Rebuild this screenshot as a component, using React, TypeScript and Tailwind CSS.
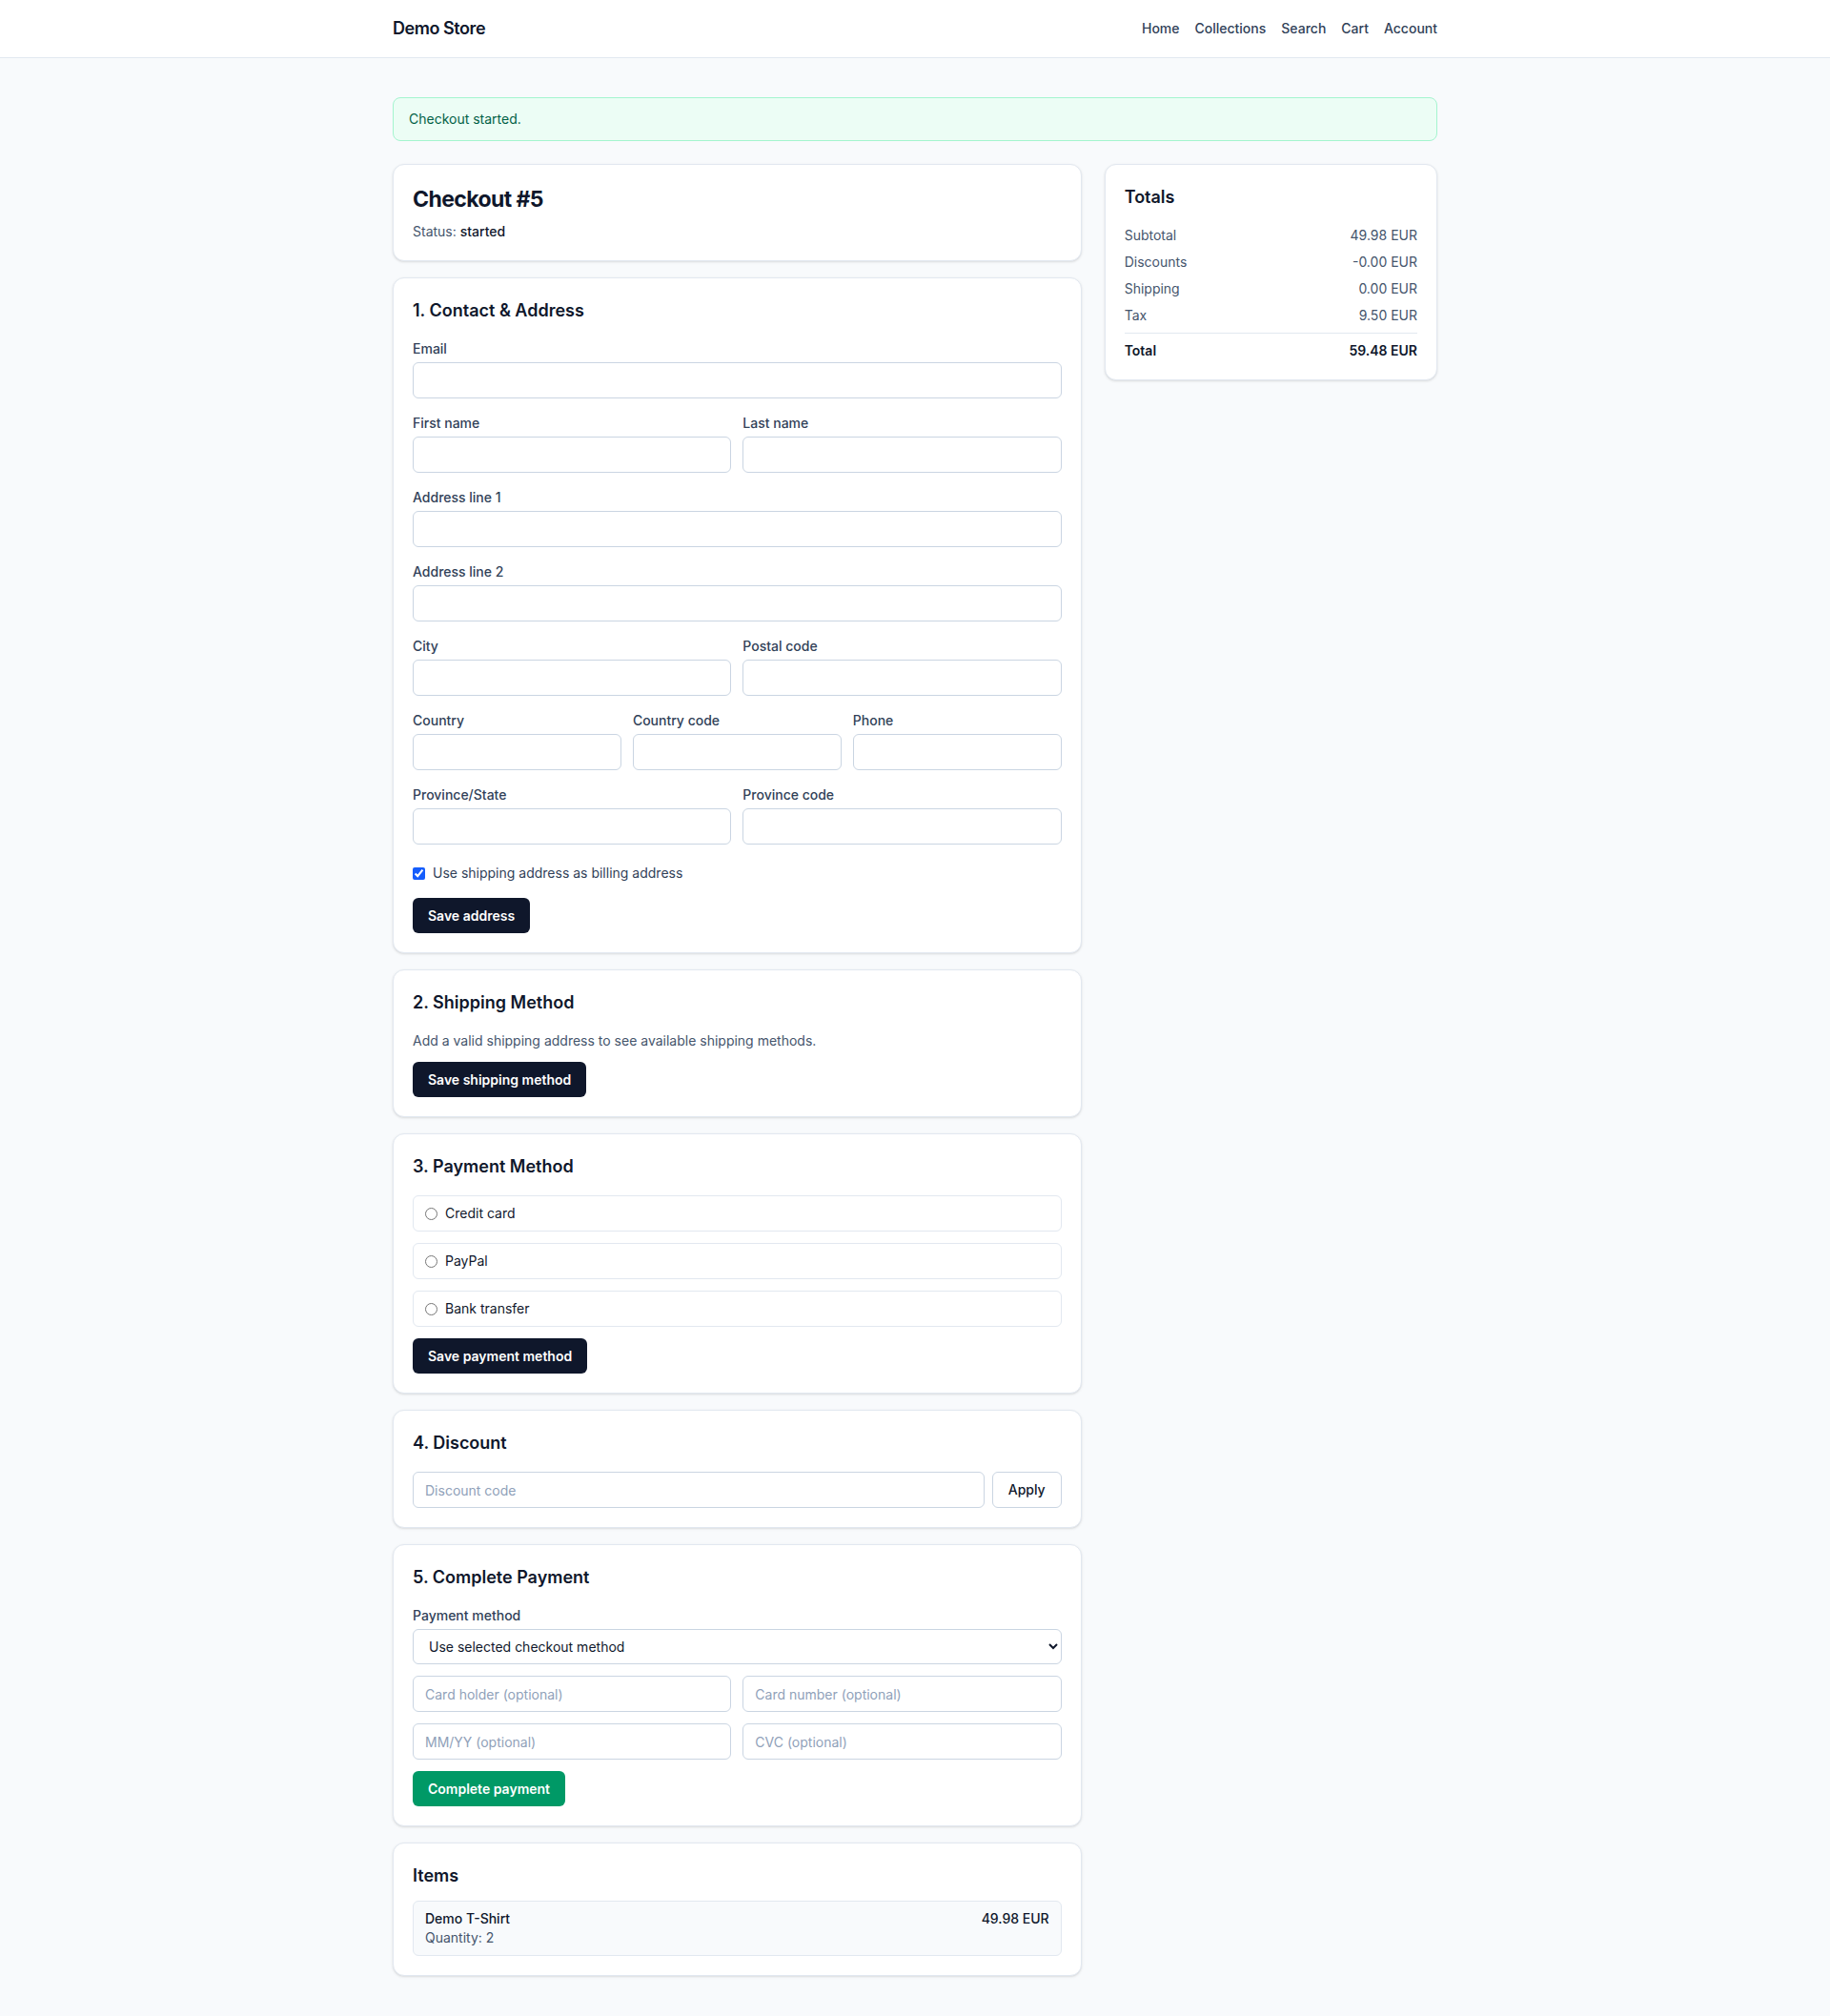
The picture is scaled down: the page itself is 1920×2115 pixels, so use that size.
import React, { useState } from "react";

type TotalRow = { label: string; value: string };

const totals: TotalRow[] = [
  { label: "Subtotal", value: "49.98 EUR" },
  { label: "Discounts", value: "-0.00 EUR" },
  { label: "Shipping", value: "0.00 EUR" },
  { label: "Tax", value: "9.50 EUR" },
];

const paymentMethods = ["Credit card", "PayPal", "Bank transfer"];

const inputClass =
  "block w-full h-[38px] rounded-md border border-slate-300 bg-white px-3 text-sm text-slate-900 placeholder:text-slate-400 focus:outline-none";

const Field = ({ label }: { label: string }) => (
  <label className="block">
    <span className="mb-1 block text-sm font-medium text-slate-700">{label}</span>
    <input className={inputClass} />
  </label>
);

const Card = ({ children }: { children: React.ReactNode }) => (
  <section className="rounded-xl border border-slate-200 bg-white p-5 shadow-sm">
    {children}
  </section>
);

const CardTitle = ({ children }: { children: React.ReactNode }) => (
  <h2 className="mb-4 text-lg font-semibold text-slate-900">{children}</h2>
);

const DarkButton = ({ children }: { children: React.ReactNode }) => (
  <button className="h-[37px] rounded-md bg-slate-900 px-4 text-sm font-semibold text-white">
    {children}
  </button>
);

export default function App() {
  const [sameBilling, setSameBilling] = useState(true);
  const [payment, setPayment] = useState("");

  return (
    <div
      className="min-h-screen bg-slate-50 text-slate-900"
      style={{ fontFamily: "Inter, 'Noto Sans', sans-serif" }}
    >
      <header className="border-b border-slate-200 bg-white">
        <div className="mx-auto flex h-[60px] max-w-[1096px] items-center justify-between">
          <span className="text-lg font-semibold tracking-tight text-slate-900">Demo Store</span>
          <nav className="flex items-center gap-4 text-sm font-medium text-slate-700">
            <a href="#">Home</a>
            <a href="#">Collections</a>
            <a href="#">Search</a>
            <a href="#">Cart</a>
            <a href="#">Account</a>
          </nav>
        </div>
      </header>

      <main className="mx-auto max-w-[1096px] pb-[42px] pt-[41px]">
        <div className="mb-6 rounded-lg border border-emerald-200 bg-emerald-50 px-4 py-3 text-sm text-emerald-800">
          Checkout started.
        </div>

        <div className="grid grid-cols-3 items-start gap-6">
          <div className="col-span-2 flex flex-col gap-[17px]">
            <Card>
              <h1 className="text-[23px] leading-8 font-bold tracking-tight text-slate-900">
                Checkout #5
              </h1>
              <p className="mt-2 text-sm text-slate-600">
                Status: <span className="font-medium text-slate-900">started</span>
              </p>
            </Card>

            <Card>
              <CardTitle>1. Contact &amp; Address</CardTitle>
              <div className="flex flex-col gap-4">
                <Field label="Email" />
                <div className="grid grid-cols-2 gap-3">
                  <Field label="First name" />
                  <Field label="Last name" />
                </div>
                <Field label="Address line 1" />
                <Field label="Address line 2" />
                <div className="grid grid-cols-2 gap-3">
                  <Field label="City" />
                  <Field label="Postal code" />
                </div>
                <div className="grid grid-cols-3 gap-3">
                  <Field label="Country" />
                  <Field label="Country code" />
                  <Field label="Phone" />
                </div>
                <div className="grid grid-cols-2 gap-3">
                  <Field label="Province/State" />
                  <Field label="Province code" />
                </div>
                <label className="flex items-center gap-2 pt-1 text-sm text-slate-700">
                  <input
                    type="checkbox"
                    className="accent-blue-600"
                    checked={sameBilling}
                    onChange={(e) => setSameBilling(e.target.checked)}
                  />
                  Use shipping address as billing address
                </label>
                <div>
                  <DarkButton>Save address</DarkButton>
                </div>
              </div>
            </Card>

            <Card>
              <CardTitle>2. Shipping Method</CardTitle>
              <p className="text-sm text-slate-600">
                Add a valid shipping address to see available shipping methods.
              </p>
              <div className="mt-3">
                <DarkButton>Save shipping method</DarkButton>
              </div>
            </Card>

            <Card>
              <CardTitle>3. Payment Method</CardTitle>
              <div className="flex flex-col gap-3">
                {paymentMethods.map((method) => (
                  <label
                    key={method}
                    className="flex h-[38px] items-center gap-2 rounded-md border border-slate-200 px-3 text-sm text-slate-900"
                  >
                    <input
                      type="radio"
                      name="payment"
                      checked={payment === method}
                      onChange={() => setPayment(method)}
                    />
                    {method}
                  </label>
                ))}
                <div>
                  <DarkButton>Save payment method</DarkButton>
                </div>
              </div>
            </Card>

            <Card>
              <CardTitle>4. Discount</CardTitle>
              <div className="flex gap-2">
                <input className={inputClass} placeholder="Discount code" />
                <button className="h-[38px] shrink-0 rounded-md border border-slate-300 bg-white px-4 text-sm font-medium text-slate-900">
                  Apply
                </button>
              </div>
            </Card>

            <Card>
              <CardTitle>5. Complete Payment</CardTitle>
              <div className="flex flex-col gap-3">
                <label className="block">
                  <span className="mb-1 block text-sm font-medium text-slate-700">
                    Payment method
                  </span>
                  <select className="block h-[37px] w-full rounded-md border border-slate-300 bg-white px-3 text-sm text-slate-900">
                    <option>Use selected checkout method</option>
                    <option>Credit card</option>
                    <option>PayPal</option>
                    <option>Bank transfer</option>
                  </select>
                </label>
                <div className="grid grid-cols-2 gap-3">
                  <input className={inputClass} placeholder="Card holder (optional)" />
                  <input className={inputClass} placeholder="Card number (optional)" />
                </div>
                <div className="grid grid-cols-2 gap-3">
                  <input className={inputClass} placeholder="MM/YY (optional)" />
                  <input className={inputClass} placeholder="CVC (optional)" />
                </div>
                <div>
                  <button className="h-[37px] rounded-md bg-emerald-600 px-4 text-sm font-semibold text-white">
                    Complete payment
                  </button>
                </div>
              </div>
            </Card>

            <section className="rounded-xl border border-slate-200 bg-white p-5 shadow-sm">
              <h2 className="mb-3 text-lg font-semibold text-slate-900">Items</h2>
              <div className="flex items-start justify-between rounded-md border border-slate-200 bg-slate-50 px-3 py-2 text-sm">
                <div>
                  <div className="font-medium text-slate-900">Demo T-Shirt</div>
                  <div className="text-slate-600">Quantity: 2</div>
                </div>
                <div className="font-medium text-slate-900">49.98 EUR</div>
              </div>
            </section>
          </div>

          <aside className="rounded-xl border border-slate-200 bg-white p-5 shadow-sm">
            <h2 className="mb-4 text-lg font-semibold text-slate-900">Totals</h2>
            <div className="flex flex-col gap-2 text-sm">
              {totals.map((row) => (
                <div key={row.label} className="flex justify-between text-slate-600">
                  <span>{row.label}</span>
                  <span>{row.value}</span>
                </div>
              ))}
              <div className="flex justify-between border-t border-slate-200 pt-2 font-semibold text-slate-900">
                <span>Total</span>
                <span>59.48 EUR</span>
              </div>
            </div>
          </aside>
        </div>
      </main>
    </div>
  );
}
